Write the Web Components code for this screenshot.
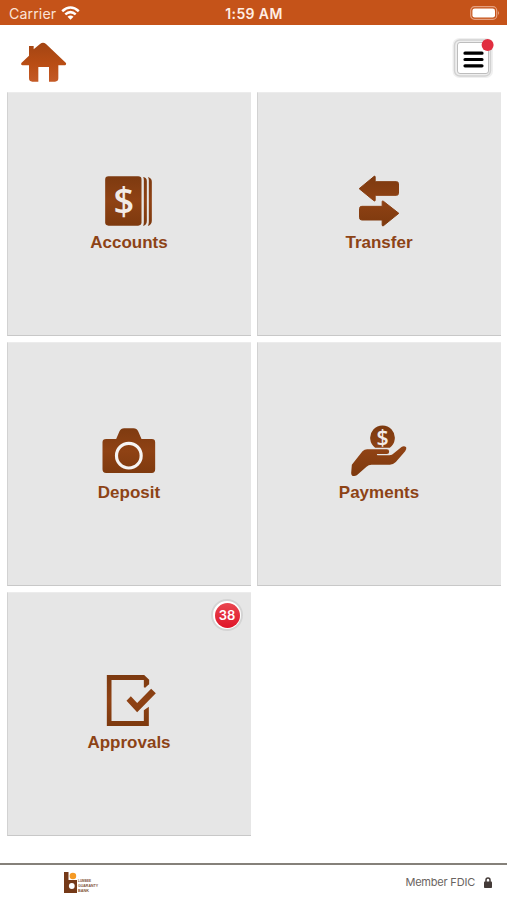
<!DOCTYPE html>
<html lang="en">
<head>
<meta charset="utf-8">
<title>Mobile banking home</title>
<style>
html,body{margin:0;height:100%;background:#fff;font-family:"Liberation Sans",Arial,sans-serif}
</style>
</head>
<body>
<bank-app></bank-app>
<script>
const define = (name, html) => customElements.define(name, class extends HTMLElement {
  constructor() {
    super();
    this.attachShadow({ mode: 'open' }).innerHTML = typeof html === 'function' ? html(this) : html;
  }
});

define('status-bar', `
<style>
:host{display:grid;grid-template-columns:1fr auto 1fr;align-items:center;height:25px;background:#c55319;color:#fff;box-sizing:border-box;padding:3px 7px 0 9px;font-family:Inter,sans-serif;line-height:20px}
.left{display:flex;align-items:center;gap:5px;font-size:14.2px;color:#fbe3d6;letter-spacing:.1px}
.time{font-size:14px;font-weight:600;letter-spacing:.4px;color:#ffeee4;margin-left:-1px}
.right{display:flex;justify-content:flex-end}
svg{display:block}
.left svg,.right svg{margin-top:-3px}
</style>
<div class="left"><span>Carrier</span>
<svg width="19" height="14" viewBox="0 0 19 14" fill="none" stroke="#fff" stroke-width="2.500"><path d="M1.200 5.200Q9.500-2.200 17.800 5.200M4.300 8.400Q9.500 3.800 14.700 8.400"/><path d="M6.500 10.700Q9.500 8.300 12.500 10.700L9.500 13.700Z" fill="#fff" stroke="none"/></svg></div>
<div class="time">1:59 AM</div>
<div class="right"><svg width="30" height="14" viewBox="0 0 30 14"><rect x=".7" y=".7" width="26" height="12.600" rx="3.800" fill="none" stroke="#e5a080" stroke-width="1.200"/><rect x="2.400" y="2.400" width="22.600" height="9.200" rx="2.300" fill="#fff"/><path d="M28 5q2 2 0 4z" fill="#e5a080"/></svg></div>`);

define('top-bar', `
<style>
:host{display:flex;justify-content:space-between;align-items:flex-start;height:67px;box-sizing:border-box;padding:12px 11px 0 20px}
.home{display:block;margin-top:3px}
.menu{display:block}
</style>
<svg class="home" width="48" height="44" viewBox="61 120 144 132"><defs><linearGradient id="h" x2="0" y2="1"><stop stop-color="#a34513"/><stop offset=".55" stop-color="#b94d14"/><stop offset="1" stop-color="#c45a26"/></linearGradient></defs><path fill="url(#h)" d="M88 138h14v10l19-16q9-7 18 0l60 57q2 7-6 7h-17v39q0 10-10 10h-18v-44h-32v44H98q-10 0-10-10v-39H68q-6-2-3-7l23-22z"/></svg>
<svg class="menu" width="46" height="46" viewBox="0 0 46 46"><rect x="2.500" y="1" width="40.500" height="40" rx="7" fill="#efefef"/><rect x="4.500" y="3" width="36" height="36" rx="5.500" fill="#eeeeee" stroke="#d2d2d2" stroke-width="1.400"/><rect x="7.500" y="5.500" width="31" height="31" rx="2.500" fill="#fff" stroke="#bdbdbd"/><path d="M15 16.200h17M15 22.500h17M15 28.800h17" stroke="#000" stroke-width="3.200" stroke-linecap="round"/><circle cx="37.600" cy="7.900" r="6" fill="#e12e40"/></svg>`);

/* Icon artwork, three units to a CSS pixel. */
const icons = {
  accounts: `<g fill="url(#g)"><rect x="76" y="31" width="109" height="148" rx="10"/><path d="M190 33q11 2 11 12v120q0 12-11 15q2-5 2-12V43q0-6-2-10zM204 33q12 3 12 14v117q0 12-12 16q3-6 3-12V43q0-6-3-10z"/></g><text x="132" y="148" text-anchor="middle" font-family="Open Sans" font-weight="600" font-size="116" textLength="62" lengthAdjust="spacingAndGlyphs" fill="#f2ebe7">$</text>`,
  transfer: `<g fill="url(#g)" stroke="url(#g)" stroke-width="3" stroke-linejoin="round"><path d="M88 68L133 31q3-2 3 2v14h64q6 0 6 6v29q0 6-6 6h-64v15q0 4-4 1z"/><path d="M207 142L161 179q-4 2-4-2v-15H96q-7 0-7-7v-27q0-7 7-7h61v-14q0-4 4-1z"/></g>`,
  deposit: `<path fill="url(#g)" d="M79 69h30l10-23q4-9 14-9h28q10 0 14 9l10 23h31q10 0 10 10v81q0 11-10 11H79q-11 0-11-11V79q0-10 11-10z"/><circle cx="147" cy="119" r="37" fill="none" stroke="#f6f4f3" stroke-width="9.500"/>`,
  payments: `<path fill="url(#g)" d="M136 95A37 37 0 1 1 180 95Z"/><text x="158" y="87" text-anchor="middle" font-family="Open Sans" font-weight="600" font-size="64" fill="#f2ebe7">$</text><path fill="url(#g)" d="M66 146L98 106q6-6 14-6h59q7 0 7 7t-7 7h-29q-3 4 2 4h35q8 0 13-6l23-19q8-5 14 1 2 6-3 12l-28 32q-8 8-18 8h-55q-9 0-15 6l-29 26q-7 4-14 1-3-3-3-8z"/>`,
  approvals: `<path fill="url(#g)" d="M81 27h112l15 14v14q-5 4-12 10l-4-1V42H95v123h97v-32l15-11v58H81z"/><path fill="url(#g)" d="M140 104l13-13 19 20 42-43 14 14-56 57z"/>`
};
define('tile-icon', el => `
<style>:host{display:block;width:60px;height:57px}svg{display:block}</style>
<svg width="60" height="57" viewBox="60.500 21 180 171"><defs><linearGradient id="g" gradientUnits="userSpaceOnUse" x1="0" y1="30" x2="0" y2="180"><stop stop-color="#7d3a10"/><stop offset=".5" stop-color="#8f4214"/><stop offset="1" stop-color="#7d390e"/></linearGradient></defs>${icons[el.getAttribute('name')]}</svg>`);

define('menu-tile', `
<style>
:host{display:flex;flex-direction:column;align-items:center;position:relative;height:244px;box-sizing:border-box;padding-top:80px;background:#e6e6e6;border-left:1px solid #d2d2d2;border-bottom:1px solid #c8c8c8;border-top:1px solid #ececec;color:#8d4316;font-weight:700;font-size:17px;line-height:20px}
.label{margin-top:3px;margin-right:1px}
::slotted(count-badge){position:absolute;top:6px;right:8px}
</style>
<slot name="icon"></slot><div class="label"><slot></slot></div><slot name="badge"></slot>`);

define('count-badge', `
<style>
:host{display:flex;align-items:center;justify-content:center;width:32px;height:32px;box-sizing:border-box;border-radius:50%;background:#fff;border:2px solid #d4d4d4}
span{display:flex;align-items:center;justify-content:center;width:25px;height:25px;border-radius:50%;background:linear-gradient(#e94750,#df1428);color:#fff;font:600 13px/25px Inter,sans-serif}
</style><span><slot></slot></span>`);

define('page-footer', `
<style>
:host{display:flex;justify-content:space-between;align-items:flex-start;height:37px;box-sizing:border-box;border-top:2px solid #85817a;padding:6px 15px 0 63px;color:#6a6461;background:#fff}
svg{display:block}
.fdic{display:flex;align-items:center;gap:9px;font:11px/16px Inter,sans-serif;margin-top:3px;letter-spacing:-.2px}
</style>
<svg width="40" height="27" viewBox="0 -1 40 27"><path fill="#753918" d="M1 0h4.500v8H14v13H1z"/><circle cx="8.800" cy="14" r="2.900" fill="#fff"/><circle cx="9.900" cy="4" r="3.300" fill="#f59a24"/><g fill="#815338" font-family="Liberation Sans" font-size="4.400" font-weight="700"><text x="15" y="10.200" textLength="13" lengthAdjust="spacingAndGlyphs">LUMBEE</text><text x="15" y="15.200" textLength="20" lengthAdjust="spacingAndGlyphs">GUARANTY</text><text x="15" y="20.300" textLength="11" lengthAdjust="spacingAndGlyphs">BANK</text></g></svg>
<div class="fdic"><span>Member FDIC</span><svg width="8" height="11" viewBox="0 0 8 11"><path d="M2 5V3a2 2 0 0 1 4 0v2" fill="none" stroke="#443b38" stroke-width="1.500"/><rect y="4.600" width="8" height="6.400" rx=".8" fill="#443b38"/></svg></div>`);

define('bank-app', `
<style>
:host{display:flex;flex-direction:column;height:900px}
main{flex:1;display:grid;grid-template-columns:repeat(2,244px);gap:6px;align-content:start;padding-left:7px}
</style>
<status-bar></status-bar>
<top-bar></top-bar>
<main>
<menu-tile><tile-icon slot="icon" name="accounts"></tile-icon>Accounts</menu-tile>
<menu-tile><tile-icon slot="icon" name="transfer"></tile-icon>Transfer</menu-tile>
<menu-tile><tile-icon slot="icon" name="deposit"></tile-icon>Deposit</menu-tile>
<menu-tile><tile-icon slot="icon" name="payments"></tile-icon>Payments</menu-tile>
<menu-tile><tile-icon slot="icon" name="approvals"></tile-icon>Approvals<count-badge slot="badge">38</count-badge></menu-tile>
</main>
<page-footer></page-footer>`);
</script>
</body>
</html>
